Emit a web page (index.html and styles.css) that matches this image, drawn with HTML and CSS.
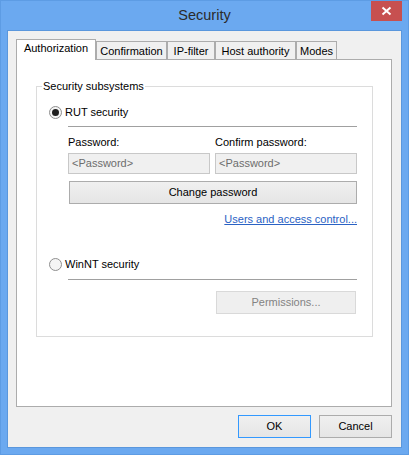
FILE: index.html
```html
<!DOCTYPE html>
<html>
<head>
<meta charset="utf-8">
<link rel="stylesheet" href="styles.css">
</head>
<body>
<div class="window">
  <div class="titlebar">
    <span class="spacer"></span>
    <span class="title">Security</span>
    <span class="close"><svg width="11" height="10" viewBox="0 0 11 10"><path d="M1.5 1.5 L9.5 8.5 M9.5 1.5 L1.5 8.5" stroke="#fff" stroke-width="2" fill="none"/></svg></span>
  </div>
  <div class="client">
    <div class="tabs">
      <div class="tab selected w1">Authorization</div>
      <div class="tab w2">Confirmation</div>
      <div class="tab w3">IP-filter</div>
      <div class="tab w4">Host authority</div>
      <div class="tab w5">Modes</div>
    </div>
    <div class="panel">
      <fieldset class="group">
        <legend>Security subsystems</legend>
        <div class="radio-row first">
          <span class="radio checked"></span><span class="radio-label">RUT security</span>
        </div>
        <div class="sub">
          <div class="rule r1"></div>
          <div class="labels"><span class="col">Password:</span><span class="col">Confirm password:</span></div>
          <div class="inputs"><div class="input">&lt;Password&gt;</div><div class="input">&lt;Password&gt;</div></div>
          <div class="btn wide">Change password</div>
          <div class="link-row"><span class="link">Users and access control...</span></div>
        </div>
        <div class="radio-row second">
          <span class="radio"></span><span class="radio-label">WinNT security</span>
        </div>
        <div class="sub">
          <div class="rule r2"></div>
          <div class="perm-row"><div class="btn disabled perm">Permissions...</div></div>
        </div>
      </fieldset>
    </div>
    <div class="buttons">
      <div class="btn dlg default">OK</div>
      <div class="btn dlg">Cancel</div>
    </div>
  </div>
</div>
</body>
</html>
```
FILE: styles.css
```css
html, body {
  margin: 0;
  padding: 0;
}
body {
  width: 409px;
  height: 455px;
  overflow: hidden;
  font-family: "Liberation Sans", Arial, sans-serif;
  font-size: 11px;
  color: #000;
}
.window {
  box-sizing: border-box;
  width: 409px;
  height: 455px;
  background: #6ba9f0;
  border: 1px solid #5d9ce4;
  padding: 0 6px 6px 6px;
  display: flex;
  flex-direction: column;
}
.titlebar {
  height: 29px;
  display: grid;
  grid-template-columns: 1fr auto 1fr;
  align-items: start;
  margin: 0 -6px;
}
.title {
  font-size: 14.5px;
  color: #2b2b2b;
  line-height: 29px;
}
.close {
  justify-self: end;
  margin-right: 6px;
  width: 31px;
  height: 20px;
  background: #c75050;
  display: flex;
  align-items: center;
  justify-content: center;
}
.client {
  box-sizing: border-box;
  height: 418px;
  border: 1px solid #5a97dd;
  background: #f0f0f0;
  padding: 8px 9px 9px 8px;
  display: flex;
  flex-direction: column;
}
.tabs {
  display: flex;
  align-items: flex-end;
  height: 21px;
  margin-bottom: -1px;
}
.tab {
  box-sizing: border-box;
  height: 18px;
  margin-bottom: 1px;
  border: 1px solid #acacac;
  border-bottom: none;
  background: #f0f0f0;
  text-align: center;
  line-height: 18px;
  white-space: nowrap;
}
.tab.selected {
  height: 21px;
  margin-bottom: 0;
  background: #fff;
  position: relative;
  z-index: 1;
  line-height: 17px;
}
.w1 { width: 80px; }
.w2 { width: 71px; }
.w3 { width: 48px; }
.w4 { width: 81px; }
.w5 { width: 41px; }
.panel {
  box-sizing: border-box;
  width: 376px;
  height: 348px;
  border: 1px solid #acacac;
  background: #fff;
  padding-top: 18px;
}
.group {
  margin: 0 18px 0 19px;
  padding: 0 0 22px 0;
  border: 1px solid #dcdcdc;
  min-width: 0;
}
.group legend {
  margin-left: 5px;
  padding: 0 1px;
  line-height: 16px;
}
.radio-row {
  display: flex;
  align-items: center;
  height: 16px;
  padding-left: 12px;
}
.radio-row.first { margin-top: 10px; }
.radio-row.second { margin-top: 29px; }
.radio {
  box-sizing: border-box;
  width: 13px;
  height: 13px;
  border-radius: 50%;
  border: 1px solid #8f8f8f;
  background: #f4f4f4;
  display: flex;
  align-items: center;
  justify-content: center;
}
.radio.checked::after {
  content: "";
  width: 7px;
  height: 7px;
  border-radius: 50%;
  background: #1e1e1e;
}
.radio-label {
  margin-left: 3px;
}
.sub {
  margin-left: 31px;
  margin-right: 15px;
}
.rule {
  height: 1px;
  background: #a0a0a0;
}
.r1 { margin-top: 6px; }
.r2 { margin-top: 7px; }
.labels {
  display: flex;
  gap: 5px;
  margin-top: 7px;
  height: 16px;
  line-height: 16px;
}
.col { width: 142px; }
.inputs {
  display: flex;
  gap: 5px;
  margin-top: 3px;
}
.input {
  box-sizing: border-box;
  width: 142px;
  height: 21px;
  border: 1px solid #c8c8c8;
  background: #f0f0f0;
  color: #6d6d6d;
  line-height: 19px;
  padding-left: 3px;
}
.btn {
  box-sizing: border-box;
  height: 23px;
  border: 1px solid #acacac;
  background: linear-gradient(#f0f0f0, #e5e5e5);
  text-align: center;
  line-height: 21px;
}
.btn.wide {
  margin-top: 7px;
  margin-left: 1px;
}
.link-row {
  margin-top: 7px;
  height: 16px;
  line-height: 16px;
  text-align: right;
}
.link {
  color: #2a62c4;
  text-decoration: underline;
}
.perm-row {
  display: flex;
  justify-content: flex-end;
  margin-top: 11px;
  padding-right: 1px;
}
.btn.perm {
  width: 140px;
}
.btn.disabled {
  background: #efefef;
  border-color: #d9d9d9;
  color: #838383;
}
.buttons {
  display: flex;
  justify-content: flex-end;
  gap: 8px;
  margin-top: 8px;
}
.btn.dlg {
  width: 73px;
}
.btn.default {
  border-color: #3399ff;
}
```
